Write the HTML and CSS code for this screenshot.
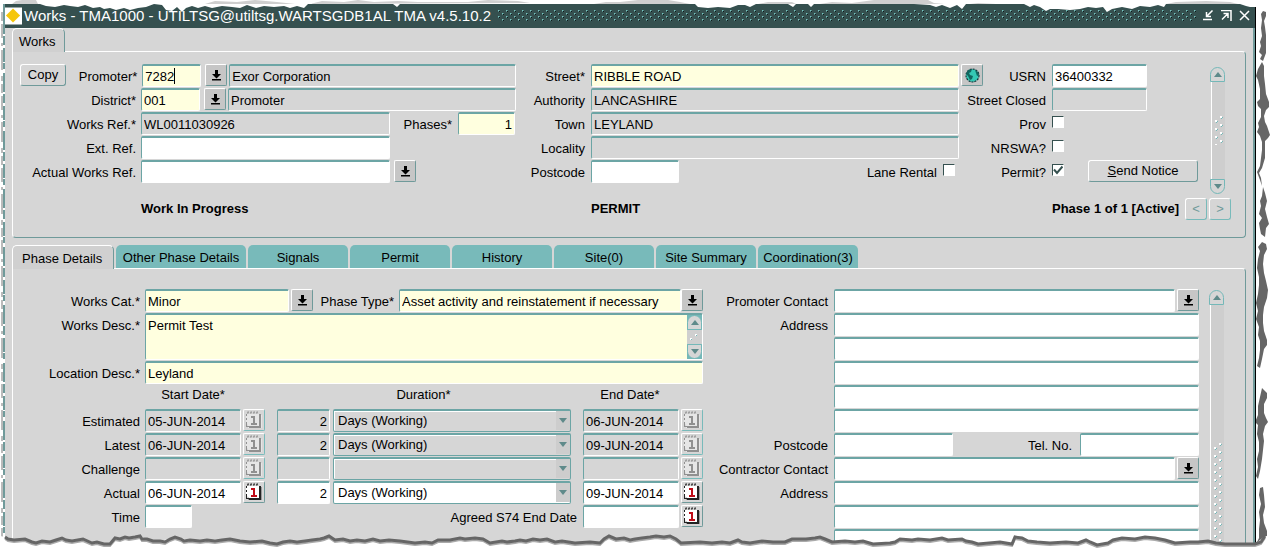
FILE: index.html
```html
<!DOCTYPE html>
<html lang="en">
<head>
<meta charset="utf-8">
<title>Works - TMA1000</title>
<link rel="stylesheet" href="styles.css">
</head>
<body>
<svg class="symbols" aria-hidden="true">
  <symbol id="i-list" viewBox="0 0 9 11"><path d="M3 0h3v4h3L4.500 8.500 0 4h3zM0 9h9v1.500H0z"/></symbol>
  <symbol id="i-cal" viewBox="0 0 18 18">
    <path class="cal-shade" d="M3 4h14v13H3z"/>
    <path class="cal-page" d="M1 3h13v12H4l-3-3z"/>
    <path class="cal-line" d="M1 3v2h1V3zM1 7v2h1V7zM1 11v5h3v-1H2v-4zM4 15h12v2H4zM14 3h2v14h-2zM2 2l1-2 1 1-1 2zM5 2l1-2 1 1-1 2zM8 2l1-2 1 1-1 2zM11 2l1-2 1 1-1 2z"/>
    <path class="cal-num" d="M6 5h4v7h2v2H6v-2h2V7H6z"/>
  </symbol>
  <symbol id="i-up" viewBox="0 0 8 5"><path d="M4 0l4 5H0z"/></symbol>
  <symbol id="i-down" viewBox="0 0 8 5"><path d="M4 5l4-5H0z"/></symbol>
  <pattern id="grip" width="12" height="8" patternUnits="userSpaceOnUse">
    <path fill="#fff" d="M1 4h2v2H1zM6 0h2v2H6z"/><path fill="#74b8b8" d="M2 6h1v1H2zM3 5h1v1H3zM7 2h1v1H7zM8 1h1v1H8z"/>
  </pattern>
</svg>
<div class="page">
<main class="window">
  <header class="titlebar">
    <svg class="logo" viewBox="0 0 18 18"><path fill="#fff" d="M0 0h18v18H0z"/><path fill="#f5c60a" d="M8.500 1L16 8.500 8.500 16 1 8.500z"/></svg>
    <h1 class="title">Works - TMA1000 - UTILTSG@utiltsg.WARTSGDB1AL TMA v4.5.10.2</h1>
    <svg class="dots" aria-hidden="true">
      <defs><pattern id="tdots" width="8" height="6" patternUnits="userSpaceOnUse">
        <path fill="#0c1818" d="M2 1h1v1H2zM6 4h1v1H6z"/><path fill="#78c4c0" d="M1 0h1v1H1zM5 3h1v1H5z"/><path fill="#558a88" d="M2 0h1v1H2zM1 1h1v1H1zM6 3h1v1H6zM5 4h1v1H5z"/>
      </pattern></defs>
      <rect width="100%" height="100%" fill="url(#tdots)"/>
    </svg>
    <div class="winbtns">
      <button class="winbtn" aria-label="Minimise"><svg viewBox="0 0 11 11"><path d="M9.500 0.500L4 6M3.500 2v4.500H8M0 9.500h9"/></svg></button>
      <button class="winbtn" aria-label="Restore"><svg viewBox="0 0 11 11"><path d="M0 0.500h10V11M1 9.500L6.500 4M2.500 3.500H7V8"/></svg></button>
      <button class="winbtn" aria-label="Close"><svg viewBox="0 0 11 11"><path d="M1 1l9 9M10 1l-9 9"/></svg></button>
    </div>
  </header>

  <div class="content">
  <nav class="tabs tabs-top"><button class="tab active first">Works</button></nav>
  <section class="panel upper">
    <div class="cols">
      <div class="col">
        <div class="row">
          <button class="btn copy">Copy</button>
          <label class="lab fill" for="promoter">Promoter*</label>
          <span class="field-wrap code"><input id="promoter" class="field req" value="7282"><span class="caret"></span></span>
          <button class="lov" aria-label="List promoters"><svg><use href="#i-list"/></svg></button>
          <input class="field ro name" aria-label="Promoter name" value="Exor Corporation" readonly>
        </div>
        <div class="row">
          <label class="lab wide" for="district">District*</label>
          <input id="district" class="field req code" value="001">
          <button class="lov" aria-label="List districts"><svg><use href="#i-list"/></svg></button>
          <input class="field ro grow" aria-label="District name" value="Promoter" readonly>
        </div>
        <div class="row">
          <label class="lab wide" for="wref">Works Ref.*</label>
          <input id="wref" class="field ro grow" value="WL0011030926" readonly>
          <label class="lab phases" for="phases">Phases*</label>
          <input id="phases" class="field req num phase-no" value="1">
        </div>
        <div class="row">
          <label class="lab wide" for="ext">Ext. Ref.</label>
          <input id="ext" class="field grow">
          <span class="spacer"></span>
        </div>
        <div class="row">
          <label class="lab wide" for="aref">Actual Works Ref.</label>
          <input id="aref" class="field grow">
          <span class="spacer"><button class="lov" aria-label="List works references"><svg><use href="#i-list"/></svg></button></span>
        </div>
      </div>
      <div class="col">
        <div class="row">
          <label class="lab mid" for="street">Street*</label>
          <input id="street" class="field req grow" value="RIBBLE ROAD">
          <button class="lov globe" aria-label="Map"><svg viewBox="0 0 15 15"><circle cx="7.500" cy="7.500" r="6.500" fill="#35c8b4" stroke="#17343a" stroke-width="1.200" stroke-dasharray="2 1"/><path fill="#12665f" d="M3 2l4-1-1 3-2 1 1 2 3 1-1 3-2 1-2-4-2-2zM10 2l3 2 1 3-2 1-1-3z"/></svg></button>
        </div>
        <div class="row"><label class="lab mid" for="auth">Authority</label><input id="auth" class="field ro grow" value="LANCASHIRE" readonly><span class="gap-end"></span></div>
        <div class="row"><label class="lab mid" for="town">Town</label><input id="town" class="field ro grow" value="LEYLAND" readonly><span class="gap-end"></span></div>
        <div class="row"><label class="lab mid" for="loc">Locality</label><input id="loc" class="field ro grow" readonly><span class="gap-end"></span></div>
        <div class="row">
          <label class="lab mid" for="pc">Postcode</label><input id="pc" class="field pc">
          <label class="lab fill lane" for="lane">Lane Rental</label><input id="lane" class="check" type="checkbox"><span class="gap-end lane-end"></span>
        </div>
      </div>
      <div class="col">
        <div class="row"><label class="lab right" for="usrn">USRN</label><input id="usrn" class="field usrn" value="36400332"></div>
        <div class="row"><label class="lab right" for="closed">Street Closed</label><input id="closed" class="field ro usrn" readonly></div>
        <div class="row"><label class="lab right" for="prov">Prov</label><input id="prov" class="check" type="checkbox"></div>
        <div class="row"><label class="lab right" for="nrswa">NRSWA?</label><input id="nrswa" class="check" type="checkbox"></div>
        <div class="row"><label class="lab right" for="permit">Permit?</label><input id="permit" class="check" type="checkbox" checked><button class="btn send"><u>S</u>end Notice</button></div>
      </div>
      <div class="scroll">
        <button class="sbtn up" aria-label="Scroll up"><svg><use href="#i-up"/></svg></button>
        <div class="track short"><svg><rect width="100%" height="100%" fill="url(#grip)"/></svg></div>
        <button class="sbtn down" aria-label="Scroll down"><svg><use href="#i-down"/></svg></button>
      </div>
    </div>
    <div class="status">
      <strong class="st1">Work In Progress</strong>
      <strong class="st2">PERMIT</strong>
      <div class="pager"><strong>Phase 1 of 1 [Active]</strong><button class="btn page-btn" aria-label="Previous phase">&lt;</button><button class="btn page-btn" aria-label="Next phase">&gt;</button></div>
    </div>
  </section>

  <nav class="tabs tabs-low">
    <button class="tab active">Phase Details</button>
    <button class="tab other">Other Phase Details</button>
    <button class="tab">Signals</button>
    <button class="tab">Permit</button>
    <button class="tab">History</button>
    <button class="tab">Site(0)</button>
    <button class="tab">Site Summary</button>
    <button class="tab">Coordination(3)</button>
  </nav>
  <section class="panel lower">
    <div class="col">
      <div class="row">
        <label class="lab dl" for="cat">Works Cat.*</label>
        <input id="cat" class="field req cat" value="Minor">
        <button class="lov near" aria-label="List categories"><svg><use href="#i-list"/></svg></button>
        <label class="lab ptype" for="ptype">Phase Type*</label>
        <input id="ptype" class="field req grow" value="Asset activity and reinstatement if necessary">
        <button class="lov tight" aria-label="List phase types"><svg><use href="#i-list"/></svg></button>
      </div>
      <div class="row tall">
        <label class="lab dl" for="wdesc">Works Desc.*</label>
        <div class="area">
          <textarea id="wdesc" class="field req">Permit Test</textarea>
          <div class="mini">
            <button class="sbtn up" aria-label="Scroll text up"><svg><use href="#i-up"/></svg></button>
            <svg class="thumb"><path fill="#fff" d="M3 8h2v2H3zM8 4h2v2H8z"/><path fill="#74b8b8" d="M4 9h1v1H4zM9 5h1v1H9z"/></svg>
            <button class="sbtn down" aria-label="Scroll text down"><svg><use href="#i-down"/></svg></button>
          </div>
        </div>
      </div>
      <div class="row"><label class="lab dl" for="ldesc">Location Desc.*</label><input id="ldesc" class="field req grow" value="Leyland"></div>
      <div class="row heads"><span class="dl"></span><span class="h-start">Start Date*</span><span class="h-dur">Duration*</span><span class="h-end">End Date*</span></div>
      <div class="row">
        <label class="lab dl" for="s1">Estimated</label>
        <input id="s1" class="field ro date" value="05-JUN-2014" readonly><button class="cal off" aria-label="Calendar" disabled><svg><use href="#i-cal"/></svg></button>
        <input class="field ro num dur" aria-label="Estimated duration" value="2" readonly>
        <span class="combo"><select class="field ro" aria-label="Estimated unit" disabled><option>Days (Working)</option></select></span>
        <input class="field ro date" aria-label="Estimated end" value="06-JUN-2014" readonly><button class="cal off" aria-label="Calendar" disabled><svg><use href="#i-cal"/></svg></button>
      </div>
      <div class="row">
        <label class="lab dl" for="s2">Latest</label>
        <input id="s2" class="field ro date" value="06-JUN-2014" readonly><button class="cal off" aria-label="Calendar" disabled><svg><use href="#i-cal"/></svg></button>
        <input class="field ro num dur" aria-label="Latest duration" value="2" readonly>
        <span class="combo"><select class="field ro" aria-label="Latest unit" disabled><option>Days (Working)</option></select></span>
        <input class="field ro date" aria-label="Latest end" value="09-JUN-2014" readonly><button class="cal off" aria-label="Calendar" disabled><svg><use href="#i-cal"/></svg></button>
      </div>
      <div class="row">
        <label class="lab dl" for="s3">Challenge</label>
        <input id="s3" class="field ro date" readonly><button class="cal off" aria-label="Calendar" disabled><svg><use href="#i-cal"/></svg></button>
        <input class="field ro num dur" aria-label="Challenge duration" readonly>
        <span class="combo"><select class="field ro" aria-label="Challenge unit" disabled><option></option></select></span>
        <input class="field ro date" aria-label="Challenge end" readonly><button class="cal off" aria-label="Calendar" disabled><svg><use href="#i-cal"/></svg></button>
      </div>
      <div class="row">
        <label class="lab dl" for="s4">Actual</label>
        <input id="s4" class="field date" value="06-JUN-2014"><button class="cal" aria-label="Calendar"><svg><use href="#i-cal"/></svg></button>
        <input class="field num dur" aria-label="Actual duration" value="2">
        <span class="combo"><select class="field" aria-label="Actual unit"><option>Days (Working)</option></select></span>
        <input class="field date" aria-label="Actual end" value="09-JUN-2014"><button class="cal" aria-label="Calendar"><svg><use href="#i-cal"/></svg></button>
      </div>
      <div class="row">
        <label class="lab dl" for="time">Time</label><input id="time" class="field time">
        <label class="lab fill agreed" for="s74">Agreed S74 End Date</label><input id="s74" class="field date"><button class="cal" aria-label="Calendar"><svg><use href="#i-cal"/></svg></button>
      </div>
    </div>
    <div class="col contacts">
      <div class="row"><label class="lab cl" for="pcon">Promoter Contact</label><input id="pcon" class="field grow"><button class="lov near" aria-label="List contacts"><svg><use href="#i-list"/></svg></button></div>
      <div class="row"><label class="lab cl" for="a1">Address</label><input id="a1" class="field grow"></div>
      <div class="row"><span class="cl"></span><input class="field grow" aria-label="Address line 2"></div>
      <div class="row"><span class="cl"></span><input class="field grow" aria-label="Address line 3"></div>
      <div class="row"><span class="cl"></span><input class="field grow" aria-label="Address line 4"></div>
      <div class="row"><span class="cl"></span><input class="field grow" aria-label="Address line 5"></div>
      <div class="row"><label class="lab cl" for="cpc">Postcode</label><input id="cpc" class="field tel"><label class="lab fill telno" for="tel">Tel. No.</label><input id="tel" class="field tel"></div>
      <div class="row"><label class="lab cl" for="ccon">Contractor Contact</label><input id="ccon" class="field grow"><button class="lov near" aria-label="List contractors"><svg><use href="#i-list"/></svg></button></div>
      <div class="row"><label class="lab cl" for="b1">Address</label><input id="b1" class="field grow"></div>
      <div class="row"><span class="cl"></span><input class="field grow" aria-label="Contractor address line 2"></div>
      <div class="row"><span class="cl"></span><input class="field grow" aria-label="Contractor address line 3"></div>
    </div>
    <div class="scroll long">
      <button class="sbtn up" aria-label="Scroll up"><svg><use href="#i-up"/></svg></button>
      <div class="track"><svg><rect width="100%" height="100%" fill="url(#grip)"/></svg></div>
    </div>
  </section>
  </div>
</main>

<svg class="tear tear-top" viewBox="0 0 1274 14" preserveAspectRatio="none" aria-hidden="true">
  <path fill="#fff" d="M0 0H1274V7H1250L1246 6 1240 4 1166 4 1164 7 1158 5 1150 7 1140 6 1132 9 1122 7 1112 9 1107 12 1103 7 1096 8 1088 7 1080 9 1070 10 1058 9 1050 9 1046 11 1040 7 1034 5 1030 7 1024 4 966 4 962 9 957 5 950 8 942 5 936 7 930 5 914 4 814 4 811 7 808 4 796 4 793 7 788 4 756 4 750 7 745 5 738 5 730 8 718 7 708 8 698 7 695 4 400 4 397 7 393 4 308 4 304 8 297 6 290 8 284 6 274 7 264 6 256 8 247 5 240 8 232 7 222 6 212 8 205 6 198 8 192 6 186 8 182 12 177 7 172 11 166 10 162 5 154 4 146 7 138 8 130 10 124 8 116 10 110 8 104 9 100 7 93 8 85 5 78 7 70 6 64 5 55 7 46 6 40 4H0z"/>
  <path fill="#cfcfcf" d="M12 4l4-3 6-1h14l2 4zM205 4l10-3 22 1 18-2 22 2 18 2zM310 4l12-3 22 1 14-2 16 2 24-1 20 1h50l20-2 30 1 12 2zM594 4l12-2 14 0 18-2h30l12 2 10 2zM758 4l10-2h24l4 2zM820 4l12-2 20 1 22-3h54l6 3 10 1zM970 4l8-1 18 1zM1166 4l10-2 30-1 24 1 8 2z"/>
</svg>
<svg class="tear tear-left" viewBox="0 0 8 553" preserveAspectRatio="none" aria-hidden="true">
  <path fill="none" stroke="#777" stroke-width="1" stroke-dasharray="9 3 14 5 3 4 20 6 5 3" d="M2 12V538"/>
  <path fill="none" stroke="#fff" stroke-width="2" stroke-dasharray="2 9 3 14 1 6 4 19" d="M4 34V540"/>
</svg>
<svg class="tear tear-right" viewBox="0 0 18 553" preserveAspectRatio="none" aria-hidden="true">
  <path fill="#666" d="M5 14l2-3 3 1 0 4-2 5 1 6 1 8 0 10 0 8-3 8-3-2 2-4-3-3 2-6-1-4 2-6-1-8 1-8zM6 62l2 4 0 10 1 8 1 10 3 8 0 5-3 3-2 6 1 6 2 4 2 6 1 3-2 3-3 3 0 8 0 9-3 10-3 5 2 5 1 8-2-6-3-8 3-6 1-8 1-8 0-8-2-6-3-4 2-5-1-4 3-6 0-8-3-3-1-4 3-3 0-10-2-9-2-4 2-7zM7 187l2 6 2 8-2 8 2 8 2 7-3 4-1 9-4-3-1-5-1-6 3-5-3-4 2-8-1-5 2-5zM6 242l4 2 1 5-3 6-1 9 1 9 2 8 2 9-1 8-3 9-1 8 0 8 1 8 3 9 0 5-3 4-2 10-2 9-3-2 2-8 1-8 0-9-2-6 1-8-3-8 2-8-2-8 2-9 1-9 0-8-2-9 1-9 2-8-2-4zM6 388l5 5 0 5-3 6 0 9 2 5 2 4-3 4-2 8 1 7-1 9-1 9-2 12-2 8-2-3 2-9-1-8 2-8 0-9-2-8 1-9-3-3 3-7 0-9 2-9zM4 488l3-1 1 8 1 12-2 8 1 8 3 8 0 5-2 5-5 4-4-1 3-6 0-9 1-9-1-8 2-8-2-9z"/>
</svg>
<svg class="tear tear-bottom" viewBox="0 0 1274 20" preserveAspectRatio="none" aria-hidden="true">
  <defs>
    <path id="edge" d="M5 4L8 6 14 7 25 6 32 9 36 10 42 8 50 9 56 7 62 5 66 7 72 8 83 6 92 10 97 9 104 11 110 11 115 5 120 6 125 4 129 5 135 4 140 3 142 6 147 6 153 8 160 8 165 9 170 6 175 4 181 6 184 8 190 7 200 8 207 7 215 8 222 7 230 6 240 8 250 9 262 8 270 10 277 11 283 9 290 8 297 9 305 8 312 7 320 6 324 5 329 3 335 7 343 6 350 8 357 7 365 8 373 6 380 8 389 7 400 8 415 10 425 9 432 10 438 7 450 7 460 5 465 6 475 5 483 6 490 10 502 8 507 9 515 8 520 7 526 8 533 6 540 7 547 6 555 9 562 8 575 10 590 9 600 10 604 6 609 3 616 6 624 5 630 7 635 6 642 5 650 4 656 3 664 4 670 3 676 6 681 10 700 9 712 10 722 9 730 10 738 7 742 9 750 10 762 8 773 9 785 9 792 6 806 6 815 5 820 4 825 6 832 9 845 8 855 9 863 8 873 11 890 10 895 9 900 6 912 7 918 6 930 7 942 5 948 7 962 6 966 8 972 9 978 11 1000 9 1012 11 1015 4 1022 5 1028 8 1037 9 1050 10 1066 9 1078 10 1086 7 1090 9 1097 12 1108 10 1113 7 1122 5 1135 6 1145 4 1155 5 1165 7 1175 10 1190 9 1198 9 1208 8 1216 10 1225 11 1240 11 1255 11 1261 9 1265 3"/>
  </defs>
  <path fill="#fff" d="M0 3L5 4 14 7 25 6 36 10 50 9 62 5 72 8 83 6 92 10 110 11 115 5 140 3 147 6 160 8 175 4 190 7 230 6 250 9 277 11 290 8 320 6 329 3 335 7 400 8 432 10 438 7 475 5 483 6 490 10 526 8 547 6 562 8 600 10 609 3 616 6 650 4 670 3 681 10 730 10 750 10 785 9 792 6 820 4 832 9 873 11 900 6 948 7 966 8 978 11 1012 11 1015 4 1028 8 1078 10 1097 12 1122 5 1155 5 1175 10 1225 11 1255 11 1265 3H1274V20H0z"/>
  <use href="#edge" y="2" fill="none" stroke="#aaa" stroke-width="2"/>
  <use href="#edge" fill="none" stroke="#666" stroke-width="3"/>
</svg>
</div>
</body>
</html>
```
FILE: styles.css
```css
* { box-sizing: border-box; }
body {
  margin: 0;
  background: #fff;
  color: #000;
  font: 13px/16px "Liberation Sans", Arial, sans-serif;
}
button, input, select, textarea { font: inherit; color: inherit; margin: 0; }
button { padding: 0; }
.symbols { position: absolute; width: 0; height: 0; }
.page { position: relative; min-height: 100vh; overflow: hidden; display: flex; }
.window {
  flex: 1;
  margin: 4px 18px 0 3px;
  background: #d6d6d6;
  border-left: 2px solid #6f9a9a;
  border-right: 1px solid #000;
  display: flex;
  flex-direction: column;
}

/* Title bar */
.titlebar {
  height: 24px;
  background: #35504f;
  color: #fff;
  display: flex;
  align-items: center;
  padding-right: 4px;
}
.logo { width: 17px; height: 18px; }
.title { margin: 0 6px 0 2px; font-size: 15px; line-height: 18px; font-weight: normal; white-space: nowrap; }
.dots { flex: 1; width: 0; height: 12px; }
.winbtns { display: flex; gap: 6px; padding-left: 6px; }
.winbtn { width: 12px; height: 12px; border: 0; background: none; display: flex; }
.winbtn svg { width: 11px; height: 11px; fill: none; stroke: #fff; stroke-width: 1.500; }

/* Tabs and panels */
.content {
  flex: 1;
  display: flex;
  flex-direction: column;
  padding: 0 7px;
  border-right: 2px solid #6f9a9a;
}
.tabs { display: flex; gap: 2px; }
.tab {
  width: 100px;
  height: 23px;
  border: 0;
  border-radius: 5px 5px 0 0;
  background: #78baba;
  white-space: nowrap;
  padding-top: 3px;
}
.tab.other { width: 130px; }
.tab.active {
  position: relative;
  width: 102px;
  height: 24px;
  margin-bottom: -1px;
  background: #d0d0d0;
  border: 1px solid #fff;
  border-right-color: #6f9a9a;
  border-bottom: 0;
  text-align: left;
  padding-left: 9px;
}
.tab.first { width: 53px; padding-left: 6px; }
.panel { border: 1px solid #fff; border-radius: 0 4px 4px 4px; border-right-color: #6f9a9a; }
.upper { border-bottom-color: #6f9a9a; padding: 12px 0 17px; }
.tabs-low { margin-top: 7px; }
.lower {
  flex: 1;
  border-bottom: 0;
  border-radius: 0 4px 0 0;
  padding-top: 20px;
  display: grid;
  grid-template-columns: 690fr 498fr 44px;
}
.cols { display: grid; grid-template-columns: 503fr 467fr 218px 44px; height: 130px; }
.col { display: flex; flex-direction: column; min-width: 0; }
.row { display: flex; height: 24px; align-items: flex-start; }
.row > * { flex-shrink: 0; }

/* Fields */
.field {
  height: 23px;
  min-width: 0;
  border: 1px solid;
  border-width: 2px 1px 1px 1px;
  border-color: #6ca5a5 #fff #fff #6ca5a5;
  border-radius: 2px;
  background: #fff;
  padding: 0 2px;
  outline: 0;
}
.req { background: #ffffdf; }
.ro { background: #d6d6d6; }
.num { text-align: right; }
.grow { flex: 1 1 0; width: 0; }
.lab { padding-top: 5px; text-align: right; white-space: nowrap; }
.fill { flex: 1 1 0; }
.code { width: 59px; }
.field-wrap { position: relative; margin-left: 5px; display: flex; }
.field-wrap .field { width: 100%; }
.name { width: 57%; }
.caret { position: absolute; left: 32px; top: 4px; width: 1px; height: 16px; background: #000; }
.wide { width: 123px; }
.wide + .field { margin-left: 5px; }
.phases { width: 68px; padding-right: 6px; }
.phase-no { width: 57px; margin-right: 1px; }
.spacer { width: 126px; display: flex; }
.mid { width: 69px; }
.mid + .field { margin-left: 6px; }
.gap-end { width: 24px; }
.lane-end { width: 28px; }
.pc { width: 88px; }
.lane { padding-right: 6px; }
.right { width: 63px; display: flex; justify-content: flex-end; }
.right + .field, .right + .check { margin-left: 6px; }
.usrn { width: 95px; }

/* Buttons */
.btn {
  height: 22px;
  border: 1px solid;
  border-color: #fff #6f9a9a #6f9a9a #fff;
  border-radius: 3px;
  background: #d6d6d6;
}
.copy { width: 46px; margin-left: 7px; }
.send { width: 110px; margin-left: 24px; }
.lov {
  width: 22px;
  height: 22px;
  margin: 0 2px 0 4px;
  border: 1px solid;
  border-color: #fff #6f9a9a #6f9a9a #fff;
  border-radius: 2px;
  background: #c6c6c6;
  display: flex;
  align-items: center;
  justify-content: center;
}
.lov svg { width: 9px; height: 11px; }
.lov.globe { margin: 0 0 0 2px; }
.lov.globe svg { width: 15px; height: 15px; }
.lov.near { margin: 0 0 0 2px; }
.lov.tight { margin: 0; }
.check {
  appearance: none;
  width: 12px;
  height: 12px;
  margin-top: 4px;
  background: #fff;
  border: 1px solid;
  border-color: #35504f #fff #fff #35504f;
}
.check:checked {
  background: #fff url("data:image/svg+xml,%3Csvg xmlns='http://www.w3.org/2000/svg' viewBox='0 0 10 10'%3E%3Cpath d='M1 4.500L4 8 9.500 1.500' fill='none' stroke='%2335504f' stroke-width='2'/%3E%3C/svg%3E");
}

/* Status row */
.status { display: grid; grid-template-columns: 503fr 467fr 262px; height: 22px; align-items: center; margin-top: 4px; }
.st1 { padding-left: 128px; }
.st2 { padding-left: 75px; }
.pager { display: flex; align-items: center; padding-left: 69px; gap: 2px; white-space: nowrap; }
.pager strong { width: 131px; }
.page-btn { width: 22px; color: #6f9a9a; border-color: #fff #78baba #78baba #fff; }

/* Scroll bars */
.scroll { margin: 3px 0 0 9px; width: 15px; display: flex; flex-direction: column; }
.sbtn {
  height: 15px;
  border: 1px solid #74b8b8;
  background: #d6d6d6;
  display: flex;
  align-items: center;
  justify-content: center;
  flex-shrink: 0;
}
.sbtn svg { width: 8px; height: 5px; fill: #5f8a8a; }
.sbtn.up { border-radius: 8px 8px 0 0; }
.sbtn.down { border-radius: 0 0 8px 8px; }
.track {
  flex: 1 1 0;
  min-height: 0;
  display: flex;
  flex-direction: column;
  width: 14px;
  margin-left: 1px;
  background: #cecece;
  border-left: 1px solid #fff;
  padding: 138px 1px 0 2px;
}
.track svg { flex: 1 1 0; min-height: 0; width: 100%; }
.track.short { padding: 34px 1px 34px 2px; }
.scroll.long { margin-top: 1px; margin-left: 8px; }

/* Phase details */
.tall { height: 48px; }
.dl { width: 127px; }
.dl + .field, .dl + .area { margin-left: 5px; }
.cat { width: 144px; }
.ptype { width: 86px; padding-right: 5px; }
.area { position: relative; flex: 1 1 0; height: 47px; display: flex; }
.area textarea { flex: 1; height: 47px; resize: none; overflow: hidden; padding: 3px 2px; line-height: 16px; }
.mini { position: absolute; right: 1px; top: 2px; bottom: 1px; width: 15px; background: #74b8b8; display: flex; flex-direction: column; }
.thumb { flex: 1; width: 15px; height: 0; background: #cfcfcf; }
.heads > * { padding-top: 2px; text-align: center; }
.h-start { width: 106px; }
.h-dur { flex: 1 1 0; padding-left: 40px; }
.h-end { width: 142px; padding-right: 4px; }
.date { width: 96px; }
.cal {
  --shade: #999;
  --page: #fff;
  --line: #222;
  --num: #c00c18;
  width: 22px;
  height: 22px;
  border: 1px solid;
  border-color: #fff #6f9a9a #6f9a9a #fff;
  border-radius: 2px;
  background: #d6d6d6;
  display: flex;
  align-items: center;
  justify-content: center;
  margin-left: 2px;
}
.cal svg { width: 18px; height: 18px; }
.cal-shade { fill: var(--shade); }
.cal-page { fill: var(--page); }
.cal-line { fill: var(--line); }
.cal-num { fill: var(--num); }
.cal.off { --shade: #e6e6e6; --page: #e6e6e6; --line: #909090; --num: #909090; border-right-color: #78baba; border-bottom-color: #78baba; }
.dur { width: 53px; margin-left: 12px; }
.combo { position: relative; flex: 1 1 0; margin: 0 12px 0 3px; display: flex; }
.combo select { appearance: none; flex: 1; color: #000; opacity: 1; padding-left: 4px; border-color: #6ca5a5; box-shadow: inset 1px 1px #fff; }
.combo::after {
  content: "";
  position: absolute;
  right: 4px;
  top: 9px;
  border: 4px solid transparent;
  border-top: 5px solid #5f8a8a;
  border-bottom: 0;
}
.combo::before { content: ""; position: absolute; right: 1px; top: 2px; bottom: 2px; width: 14px; background: #cdcdcd; }
.time { width: 47px; }
.agreed { padding-right: 6px; }
.cl { width: 125px; }
.cl + .field { margin-left: 6px; }
.contacts .row { padding-right: 2px; }
.tel { width: 119px; }
.telno { padding-right: 8px; }

/* Torn border */
.tear { position: absolute; pointer-events: none; }
.tear-top { left: 0; top: 0; width: 100%; height: 14px; }
.tear-left { left: 0; top: 0; width: 8px; height: 100%; }
.tear-right { right: 0; top: 0; width: 18px; height: 100%; }
.tear-bottom { left: 0; bottom: 0; width: 100%; height: 20px; }
```
